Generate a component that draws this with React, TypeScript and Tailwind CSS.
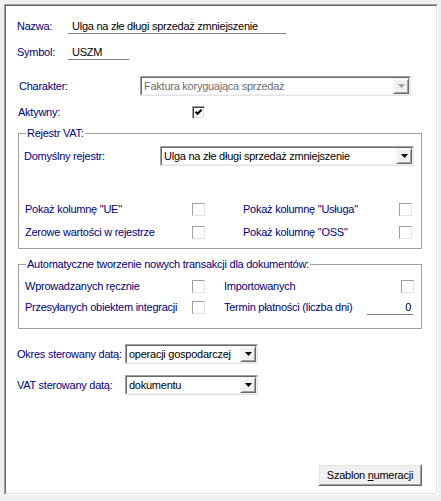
import React from "react";

function Check({ checked = false }: { checked?: boolean }) {
  if (checked) {
    return (
      <div className="w-[13px] h-[13px] shrink-0 flex items-center justify-center border border-t-[#a0a0a0] border-l-[#a0a0a0] border-r-[#ffffff] border-b-[#ffffff] bg-white shadow-[inset_1px_1px_0_#404040,inset_-1px_-1px_0_#e3e3e3]">
        <svg width="9" height="9" viewBox="0 0 9 9">
          <path d="M1.5 3.8 L3.5 5.8 L7.6 1.7" stroke="#000" strokeWidth="2" fill="none" />
        </svg>
      </div>
    );
  }
  return (
    <div className="w-[13px] h-[13px] shrink-0 border border-t-[#a0a0a0] border-l-[#a0a0a0] border-r-[#e3e3e3] border-b-[#e3e3e3] bg-white" />
  );
}

function Combo({
  className,
  text,
  disabled = false,
}: {
  className: string;
  text: string;
  disabled?: boolean;
}) {
  return (
    <div
      className={
        "flex shrink-0 border border-t-[#a0a0a0] border-l-[#a0a0a0] border-r-[#e3e3e3] border-b-[#e3e3e3] " +
        className
      }
    >
      <div className="flex flex-1 min-w-0 border border-t-[#696969] border-l-[#696969] border-r-[#f0f0f0] border-b-[#f0f0f0] bg-white">
        <span
          className={
            "flex-1 min-w-0 self-center pl-[2px] leading-[14px] whitespace-nowrap overflow-hidden " +
            (disabled ? "text-[#6d6d6d]" : "text-black")
          }
        >
          {text}
        </span>
        <div className="w-[16px] shrink-0 flex items-center justify-center bg-[#f0f0f0] border border-t-[#f0f0f0] border-l-[#f0f0f0] border-r-[#696969] border-b-[#696969] shadow-[inset_1px_1px_0_#ffffff,inset_-1px_-1px_0_#a0a0a0]">
          <svg width="7" height="4" viewBox="0 0 7 4">
            <path d="M0 0 H7 L3.5 4 Z" fill={disabled ? "#a0a0a0" : "#000"} />
          </svg>
        </div>
      </div>
    </div>
  );
}

export default function App() {
  const label = "text-[#000080] leading-[13px] whitespace-nowrap shrink-0";
  return (
    <div className="w-[441px] h-[501px] bg-[#f0f0f0] pt-[4px] pl-[4px] font-['Liberation_Sans',Arial,sans-serif] text-[11px] tracking-[-0.25px]">
      <div className="w-[434px] h-[491px] border border-t-[#a0a0a0] border-l-[#a0a0a0] border-r-[#ffffff] border-b-[#ffffff]">
        <div className="w-full h-full flex flex-col bg-white border border-t-[#696969] border-l-[#696969] border-r-[#e3e3e3] border-b-[#e3e3e3]">
          {/* Nazwa */}
          <div className="mt-[14px] flex items-start h-[14px]">
            <span className={label + " ml-[11px] w-[51px]"}>Nazwa:</span>
            <div className="w-[218px] h-[14px] border-b border-[#808080] pl-[4px] leading-[13px] text-black whitespace-nowrap">
              Ulga na złe długi sprzedaż zmniejszenie
            </div>
          </div>
          {/* Symbol */}
          <div className="mt-[12px] flex items-start h-[14px]">
            <span className={label + " ml-[11px] w-[51px]"}>Symbol:</span>
            <div className="w-[61px] h-[14px] border-b border-[#808080] pl-[4px] leading-[13px] text-black whitespace-nowrap">
              USZM
            </div>
          </div>
          {/* Charakter */}
          <div className="mt-[16px] flex items-center h-[20px]">
            <span className={label + " ml-[13px] w-[121px]"}>Charakter:</span>
            <Combo className="w-[271px] h-[20px]" text="Faktura koryguająca sprzedaż" disabled />
          </div>
          {/* Aktywny */}
          <div className="mt-[10px] flex items-center h-[13px]">
            <span className={label + " ml-[12px] w-[174px]"}>Aktywny:</span>
            <Check checked />
          </div>

          {/* Rejestr VAT */}
          <fieldset className="mt-[8px] ml-[12px] w-[404px] h-[122px] border border-[#a0a0a0] p-0 m-0 min-w-0 shrink-0">
            <legend className="ml-[7px] px-[1px] leading-[13px] text-[#000080]">Rejestr VAT:</legend>
            <div className="mt-[6px] flex items-center h-[20px] pl-[5px]">
              <span className={label + " w-[136px]"}>Domyślny rejestr:</span>
              <Combo className="w-[254px] h-[20px]" text="Ulga na złe długi sprzedaż zmniejszenie" />
            </div>
            <div className="mt-[37px] flex items-center h-[13px] pl-[6px]">
              <span className={label + " w-[167px]"}>Pokaż kolumnę &quot;UE&quot;</span>
              <Check />
              <div className="w-[38px] shrink-0" />
              <span className={label + " w-[156px]"}>Pokaż kolumnę &quot;Usługa&quot;</span>
              <Check />
            </div>
            <div className="mt-[10px] flex items-center h-[13px] pl-[6px]">
              <span className={label + " w-[167px]"}>Zerowe wartości w rejestrze</span>
              <Check />
              <div className="w-[38px] shrink-0" />
              <span className={label + " w-[156px]"}>Pokaż kolumnę &quot;OSS&quot;</span>
              <Check />
            </div>
          </fieldset>

          {/* Automatyczne */}
          <fieldset className="mt-[9px] ml-[12px] w-[404px] h-[71px] border border-[#a0a0a0] p-0 m-0 min-w-0 shrink-0">
            <legend className="ml-[7px] px-[1px] leading-[13px] text-[#000080]">
              Automatyczne tworzenie nowych transakcji dla dokumentów:
            </legend>
            <div className="mt-[9px] flex items-center h-[13px] pl-[6px]">
              <span className={label + " w-[167px]"}>Wprowadzanych ręcznie</span>
              <Check />
              <div className="w-[19px] shrink-0" />
              <span className={label + " w-[177px]"}>Importowanych</span>
              <Check />
            </div>
            <div className="mt-[8px] flex items-start h-[14px] pl-[6px]">
              <span className={label + " w-[167px]"}>Przesyłanych obiektem integracji</span>
              <Check />
              <div className="w-[19px] shrink-0" />
              <span className={label + " w-[143px]"}>Termin płatności (liczba dni)</span>
              <div className="w-[46px] h-[14px] border-b border-[#808080] pr-[2px] text-right leading-[13px] text-black">
                0
              </div>
            </div>
          </fieldset>

          {/* Okres */}
          <div className="mt-[15px] flex items-center h-[20px]">
            <span className={label + " ml-[11px] w-[108px]"}>Okres sterowany datą:</span>
            <Combo className="w-[133px] h-[20px]" text="operacji gospodarczej" />
          </div>
          {/* VAT */}
          <div className="mt-[11px] flex items-center h-[20px]">
            <span className={label + " ml-[11px] w-[108px]"}>VAT sterowany datą:</span>
            <Combo className="w-[133px] h-[20px]" text="dokumentu" />
          </div>

          <div className="mt-auto mb-[7px] flex justify-end pr-[14px]">
            <button className="w-[104px] h-[22px] bg-[#f0f0f0] border border-t-[#ffffff] border-l-[#ffffff] border-r-[#696969] border-b-[#696969] shadow-[inset_1px_1px_0_#e3e3e3,inset_-1px_-1px_0_#a0a0a0] text-black leading-[13px] text-[11px]">
              Szablon <span className="underline">n</span>umeracji
            </button>
          </div>
        </div>
      </div>
    </div>
  );
}
